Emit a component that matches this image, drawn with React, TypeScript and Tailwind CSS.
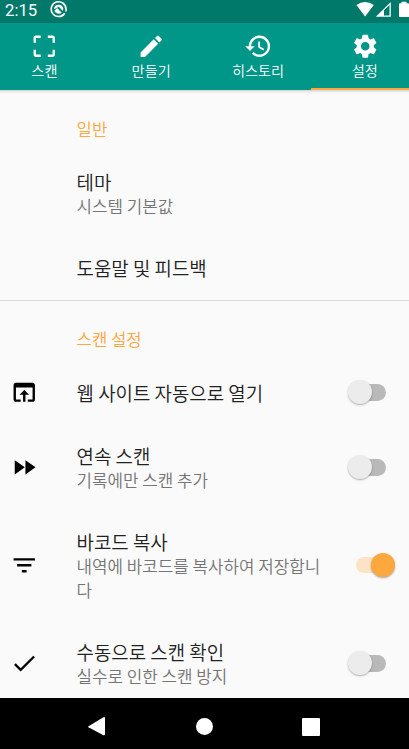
import type { ReactNode } from 'react';

function Icon({ d, className = '' }: { d: string; className?: string }) {
  return (
    <svg viewBox="0 0 24 24" fill="currentColor" className={`h-[28.5px] w-[28.5px] shrink-0 ${className}`}>
      <path d={d} />
    </svg>
  );
}

const icons = {
  scan: 'M3 5v4h2V5h4V3H5c-1.1 0-2 .9-2 2zm2 10H3v4c0 1.1.9 2 2 2h4v-2H5v-4zm14 4h-4v2h4c1.1 0 2-.9 2-2v-4h-2v4zm0-16h-4v2h4v4h2V5c0-1.1-.9-2-2-2z',
  edit: 'M3 17.25V21h3.75L17.81 9.94l-3.75-3.75L3 17.25zM20.71 7.04a1 1 0 0 0 0-1.41l-2.34-2.34a1 1 0 0 0-1.41 0l-1.83 1.83 3.75 3.75 1.83-1.83z',
  history:
    'M13 3c-4.97 0-9 4.03-9 9H1l3.89 3.89.07.14L9 12H6c0-3.87 3.13-7 7-7s7 3.13 7 7-3.13 7-7 7c-1.93 0-3.68-.79-4.94-2.06l-1.42 1.42A8.954 8.954 0 0 0 13 21c4.97 0 9-4.03 9-9s-4.03-9-9-9zm-1 5v5l4.28 2.54.72-1.21-3.5-2.08V8H12z',
  settings:
    'M19.14 12.94c.04-.3.06-.61.06-.94 0-.32-.02-.64-.07-.94l2.03-1.58c.18-.14.23-.41.12-.61l-1.92-3.32c-.12-.22-.37-.29-.59-.22l-2.39.96c-.5-.38-1.03-.7-1.62-.94l-.36-2.54c-.04-.24-.24-.41-.48-.41h-3.84c-.24 0-.43.17-.47.41l-.36 2.54c-.59.24-1.13.57-1.62.94l-2.39-.96c-.22-.08-.47 0-.59.22L2.74 8.87c-.12.21-.08.47.12.61l2.03 1.58c-.05.3-.09.63-.09.94s.02.64.07.94l-2.03 1.58c-.18.14-.23.41-.12.61l1.92 3.32c.12.22.37.29.59.22l2.39-.96c.5.38 1.03.7 1.62.94l.36 2.54c.05.24.24.41.48.41h3.84c.24 0 .44-.17.47-.41l.36-2.54c.59-.24 1.13-.56 1.62-.94l2.39.96c.22.08.47 0 .59-.22l1.92-3.32c.12-.22.07-.47-.12-.61l-2.01-1.58zM12 15.6c-1.98 0-3.6-1.62-3.6-3.6s1.62-3.6 3.6-3.6 3.6 1.62 3.6 3.6-1.62 3.6-3.6 3.6z',
  open: 'M19 4H5c-1.11 0-2 .9-2 2v12c0 1.1.89 2 2 2h4v-2H5V8h14v10h-4v2h4c1.1 0 2-.9 2-2V6c0-1.1-.89-2-2-2zm-7 6l-4 4h3v6h2v-6h3l-4-4z',
  forward: 'M4 18l8.5-6L4 6v12zm9-12v12l8.5-6L13 6z',
  filter: 'M10 18h4v-2h-4v2zM3 6v2h18V6H3zm3 7h12v-2H6v2z',
  check: 'M9 16.17L4.83 12l-1.42 1.41L9 19 21 7l-1.41-1.41z',
};

function Tab({ icon, label, active = false }: { icon: string; label: string; active?: boolean }) {
  return (
    <div
      className={`flex h-[67px] w-[106.8px] shrink-0 flex-col items-center border-b-[2.5px] pt-[9px] ${
        active ? 'border-[#ffa940]' : 'border-transparent'
      }`}
    >
      <Icon d={icon} />
      <span className="-mt-[0.5px] text-[14.2px] leading-[20px]">{label}</span>
    </div>
  );
}

function Category({ children }: { children: ReactNode }) {
  return <h2 className="flex h-[41px] shrink-0 items-center pl-[76.6px] text-[16.7px] text-[#ffa63c]">{children}</h2>;
}

function Toggle({ on }: { on: boolean }) {
  return (
    <div className={`flex w-[48px] shrink-0 items-center ${on ? 'justify-end' : 'pl-px'}`}>
      {on ? (
        <>
          <div className="-mr-[14px] h-[16px] w-[29px] shrink-0 rounded-full bg-[#fde3c5]" />
          <div className="z-10 h-[24px] w-[24px] shrink-0 rounded-full bg-[#fca83f] shadow-[0_1px_2px_rgba(0,0,0,0.35)]" />
        </>
      ) : (
        <>
          <div className="z-10 h-[24px] w-[24px] shrink-0 rounded-full bg-[#ececec] shadow-[0_1px_2px_rgba(0,0,0,0.3)]" />
          <div className="-ml-[15px] h-[17px] w-[29px] shrink-0 rounded-full bg-[#b9b9b9]" />
        </>
      )}
    </div>
  );
}

function Row({ icon, title, summary, on, height }: { icon?: string; title: string; summary?: string; on?: boolean; height: string }) {
  return (
    <div className={`flex shrink-0 items-center pl-[10px] pr-[14px] ${height}`}>
      <div className="w-[66.6px] shrink-0 text-black">{icon && <Icon d={icon} />}</div>
      <div className={`min-w-0 flex-1 ${icon || summary ? 'pt-[2px]' : ''}`}>
        <div className="text-[18.9px] leading-[24px] text-[#212121]">{title}</div>
        {summary && <div className="w-[252px] break-all text-[16.85px] leading-[24px] text-[#757575]">{summary}</div>}
      </div>
      {on !== undefined && <Toggle on={on} />}
    </div>
  );
}

export default function App() {
  return (
    <div className="flex h-[749px] w-[409px] flex-col overflow-hidden bg-[#fafafa] font-['Noto_Sans_CJK_KR',sans-serif] font-[350]">
      <div className="flex h-[23px] shrink-0 items-start bg-[#00796b] pl-[5px] text-white">
        <span className="w-[45px] pt-px font-['Roboto',sans-serif] text-[16.7px] leading-[20px] font-normal">2:15</span>
        <svg viewBox="0 0 18 18" className="h-[18px] w-[18px]">
          <path d="M14.8 13.2A7.4 7.4 0 1 1 16 9.4v2" fill="none" stroke="white" strokeWidth="1.6" />
          <path d="M11.2 15.8l2-1.2" stroke="white" strokeWidth="1.6" />
          <path d="M4 9.2A4.7 4.7 0 0 1 13.3 8.6L12.9 11 8.8 6.8Z" fill="white" />
          <path d="M4.4 10.7 7.2 8.1l4.5 4.6A4.7 4.7 0 0 1 4.4 10.7Z" fill="white" />
        </svg>
        <svg viewBox="0 0 55 18" className="ml-auto h-[18px] w-[55px]" fill="white">
          <path d="M2.4 5Q11.1-1 19.8 5L11.1 16.4Z" />
          <path fillRule="evenodd" d="M21.8 16.8 36.8 2v14.8ZM30 10.3v5.2h5.5V5Z" />
          <path d="M45 4.2q0-1 1-1h1.5V1.7h5v1.5h1.5q1 0 1 1V17h-9q-1 0-1-1Z" />
        </svg>
      </div>
      <nav className="z-10 -ml-[9px] flex w-[428px] shrink-0 bg-[#009688] text-white shadow-[0_1px_3px_rgba(0,0,0,0.2)]">
        <Tab icon={icons.scan} label="스캔" />
        <Tab icon={icons.edit} label="만들기" />
        <Tab icon={icons.history} label="히스토리" />
        <Tab icon={icons.settings} label="설정" active />
      </nav>
      <main className="flex min-h-0 flex-1 flex-col overflow-hidden pt-[19px]">
        <Category>일반</Category>
        <Row title="테마" summary="시스템 기본값" height="h-[86px]" />
        <Row title="도움말 및 피드백" height="h-[64px]" />
        <div className="h-px shrink-0 bg-[#d9d9d9]" />
        <div className="h-[18px] shrink-0" />
        <Category>스캔 설정</Category>
        <Row icon={icons.open} title="웹 사이트 자동으로 열기" on={false} height="h-[64px]" />
        <Row icon={icons.forward} title="연속 스캔" summary="기록에만 스캔 추가" on={false} height="h-[86px]" />
        <Row icon={icons.filter} title="바코드 복사" summary="내역에 바코드를 복사하여 저장합니다" on height="h-[110px]" />
        <Row icon={icons.check} title="수동으로 스캔 확인" summary="실수로 인한 스캔 방지" on={false} height="h-[86px]" />
      </main>
      <footer className="flex h-[51px] shrink-0 items-center bg-black pt-[6px] pl-[88px]">
        <svg viewBox="0 0 17 20" className="h-[20px] w-[17px]" fill="white">
          <path d="M.5 9.2 15 .4q2-1 2 1V17q0 2-2 1L.5 10.2q-.6-.5 0-1Z" />
        </svg>
        <div className="ml-[91px] h-[17px] w-[17px] rounded-full bg-white" />
        <div className="ml-[89px] h-[18px] w-[18px] rounded-[1px] bg-white" />
      </footer>
    </div>
  );
}
